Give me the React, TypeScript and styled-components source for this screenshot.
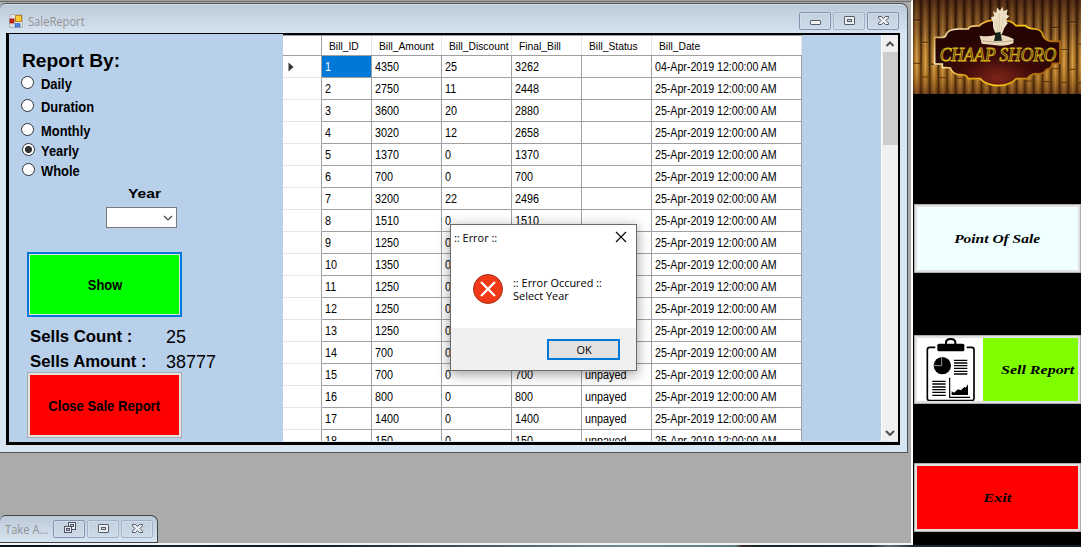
import React from "react";
import styled, { createGlobalStyle, css } from "styled-components";

const Global = createGlobalStyle`
  *, *::before, *::after { box-sizing: border-box; }
  html, body { margin: 0; padding: 0; overflow: hidden; }
  body { font-family: "Liberation Sans", Arial, sans-serif; color: #000; }
`;

const Screen = styled.div`
  display: grid;
  grid-template-columns: 913px 168px;
  grid-template-rows: 545px 2px;
  width: 1081px;
  height: 547px;
  overflow: hidden;
  position: relative;
  background: #000;
`;

const Client = styled.main`
  position: relative;
  background: #ababab;
  border-top: 1px solid #a0a0a0;
  border-right: 2px solid #fff;
  border-bottom: 2px solid #f4f4f4;
  box-shadow: inset 0 1px 0 #696969;
  padding-top: 2px;
  overflow: hidden;
`;

const Wallpaper = styled.div`
  grid-column: 1 / -1;
  background: linear-gradient(90deg, #06141a 0, #10242b 180px, #0a181e 300px, #31484e 430px, #6f8a90 620px, #5f7b82 735px,
    #3b2a22 742px, #12262d 760px, #1b3138 870px, #5a6d74 890px, #1a2b32 915px, #121f27 1081px);
`;

/* text squeezed or widened to the proportions of the form fonts */
const Text = styled.span<{ $size: number; $stretch?: number; $bold?: boolean; $family?: string; $italic?: boolean; $origin?: string }>`
  display: inline-block;
  white-space: pre;
  font-size: ${(p) => p.$size}px;
  font-weight: ${(p) => (p.$bold ? 700 : 400)};
  font-style: ${(p) => (p.$italic ? "italic" : "normal")};
  ${(p) => p.$family && css`font-family: ${p.$family};`}
  transform: scaleX(${(p) => p.$stretch ?? 1});
  transform-origin: ${(p) => p.$origin ?? "left"} center;
`;

const UI = `"Open Sans", "Noto Sans", sans-serif`;
const SCRIPT = `"Liberation Serif", "Times New Roman", serif`;

/* ---------- window chrome ---------- */

const Window = styled.section`
  display: flex;
  flex-direction: column;
  width: 908px;
  height: 450px;
  padding: 0 7px 7px 6px;
  border: 1px solid #4d5259;
  border-left: 0;
  border-radius: 6px 7px 0 0;
  background: linear-gradient(#bccad8, #d7e4f2 30px, #d7e4f2);
  box-shadow: inset 0 1px 0 #d5dfe9;
`;

const TitleBar = styled.header`
  display: flex;
  align-items: center;
  height: 29px;
  padding: 5px 1px 0 3px;
`;

const TitleText = styled.div`
  flex: 1;
  min-width: 0;
  color: #929292;
  line-height: 16px;
  padding-left: 5px;
`;

const MiniTitle = styled(TitleText)`
  padding: 2px 0 0;
`;

const CaptionButtons = styled.div`
  display: flex;
  gap: 2px;
`;

const CaptionButton = styled.button<{ $faint?: boolean }>`
  display: flex;
  align-items: center;
  justify-content: center;
  width: 32px;
  height: 18px;
  padding: 0 0 1px 1px;
  border: 1px solid ${(p) => (p.$faint ? "#a3b2c8" : "#8493b1")};
  border-radius: 2px;
  background: linear-gradient(#c3d0de, #cddae7);
  box-shadow: inset 0 0 0 1px #d2deea;
`;

const Frame = styled.div`
  display: flex;
  flex: 1;
  border: 3px solid #000;
  border-top-width: 1px;
  border-right-width: 2px;
  width: 894px;
`;

/* ---------- report options ---------- */

const Options = styled.aside`
  display: flex;
  flex-direction: column;
  width: 274px;
  height: 408px;
  padding-top: 9px;
  background: #b9d0eb;
`;

const Heading = styled.h1`
  margin: 0;
  padding-left: 13px;
  height: 31px;
  line-height: 27px;
`;

const RadioRow = styled.label<{ $gap?: number; $shift?: number }>`
  display: flex;
  align-items: center;
  gap: ${(p) => 7 - (p.$shift ?? 0)}px;
  height: 20px;
  margin-top: ${(p) => p.$gap ?? 0}px;
  padding-left: ${(p) => 12 + (p.$shift ?? 0)}px;
  line-height: 20px;
`;

const Radio = styled.span<{ $on?: boolean }>`
  width: 13px;
  height: 13px;
  margin-bottom: 3px;
  border: 1px solid #333;
  border-radius: 50%;
  background: ${(p) => (p.$on ? "radial-gradient(circle, #333 0 3.2px, #fff 3.9px)" : "#fff")};
`;

const YearField = styled.div`
  display: flex;
  flex-direction: column;
  padding: 3px 0 0 97px;
`;

const YearLabel = styled.div`
  height: 23px;
  line-height: 17px;
  padding-left: 22px;
`;

const Select = styled.div`
  display: flex;
  align-items: center;
  justify-content: flex-end;
  width: 71px;
  height: 21px;
  padding-right: 3px;
  border: 1px solid #7a7a7a;
  background: #fff;
`;

const ActionButton = styled.button<{ $color: string; $focus?: boolean; $top: number; $height: number }>`
  width: 155px;
  height: ${(p) => p.$height}px;
  margin: ${(p) => p.$top}px 0 0 18px;
  padding: 0;
  border: ${(p) => (p.$focus ? "2px solid #0078d7" : "1px solid #adadad")};
  background: ${(p) => p.$color};
  box-shadow: inset 0 0 0 ${(p) => (p.$focus ? 1 : 2)}px #e1e1e1;
  text-align: center;
`;

const Totals = styled.dl`
  display: grid;
  grid-template-columns: 136px 1fr;
  grid-auto-rows: 25px;
  margin: 7px 0 0;
  padding-left: 21px;
  height: 49px;
  line-height: 25px;
  dt, dd { margin: 0; }
`;

/* ---------- data grid ---------- */

const GridPane = styled.div`
  display: flex;
  flex: 1;
  height: 407px;
  border-top: 1px solid #000;
  background: #b9d0eb;
  overflow: hidden;
`;

const Table = styled.div`
  width: 519px;
  height: 406px;
  border-top: 1px solid #a0a0a0;
  overflow: hidden;
`;

const columns = "39px 50px 70px 70px 70px 70px 150px";

const HeadRow = styled.div`
  display: grid;
  grid-template-columns: ${columns};
  height: 20px;
  background: #fff;
  border-bottom: 1px solid #a0a0a0;
`;

const HeadCell = styled.div<{ $first?: boolean }>`
  border-right: 1px solid ${(p) => (p.$first ? "#a0a0a0" : "#e5e5e5")};
  padding-left: 7px;
  line-height: 18px;
  white-space: nowrap;
`;

const Row = styled.div`
  display: grid;
  grid-template-columns: ${columns};
  height: 22px;
  background: #fff;
`;

const RowHeader = styled.div`
  display: flex;
  align-items: center;
  padding-left: 5px;
  border-right: 1px solid #a0a0a0;
  border-bottom: 1px solid #e5e5e5;
`;

const Cell = styled.div<{ $selected?: boolean }>`
  padding-left: 3px;
  border-right: 1px solid #a0a0a0;
  border-bottom: 1px solid #a0a0a0;
  line-height: 20px;
  white-space: nowrap;
  color: ${(p) => (p.$selected ? "#fff" : "#000")};
  background: ${(p) => (p.$selected ? "#0078d7" : "#fff")};
`;

const ScrollBar = styled.div`
  display: flex;
  flex-direction: column;
  align-items: center;
  width: 17px;
  height: 406px;
  margin-left: auto;
  background: #f0f0f0;
  border-left: 1px solid #fff;
`;

const ScrollArrow = styled.div`
  display: flex;
  align-items: center;
  justify-content: center;
  height: 17px;
`;

const Thumb = styled.div`
  width: 15px;
  height: 93px;
  margin-bottom: auto;
  background: #cdcdcd;
`;

/* ---------- minimised child window ---------- */

const MiniWindow = styled.section`
  position: absolute;
  left: 0;
  top: 514px;
  display: flex;
  align-items: center;
  width: 158px;
  height: 28px;
  padding: 0 4px 1px 5px;
  border: 1px solid #3f444a;
  border-left: 0;
  border-radius: 6px 7px 0 0;
  background: linear-gradient(#bccad8, #d7e4f2);
`;

/* ---------- sidebar ---------- */

const Sidebar = styled.nav`
  display: flex;
  flex-direction: column;
  background: #000;
`;

const NavButton = styled.button<{ $color: string; $top: number }>`
  display: flex;
  align-items: center;
  justify-content: center;
  width: 167px;
  height: 69px;
  margin: ${(p) => p.$top}px 0 0 1px;
  padding: 1px 0 0;
  border: 1px solid #adadad;
  outline: 2px solid #e1e1e1;
  outline-offset: -3px;
  background: ${(p) => p.$color};
`;

const SplitButton = styled(NavButton)`
  justify-content: flex-start;
  padding: 2px;
`;

const SplitIcon = styled.span`
  display: flex;
  width: 66px;
  height: 63px;
  background: #fff;
`;

const SplitLabel = styled.span`
  flex: 1;
  text-align: left;
  padding: 1px 0 0 18px;
`;

/* ---------- message box ---------- */

const Dialog = styled.section`
  position: absolute;
  left: 450px;
  top: 224px;
  display: flex;
  flex-direction: column;
  width: 187px;
  height: 147px;
  border: 1px solid #6b6b6b;
  background: #fff;
  box-shadow: 0 3px 12px rgba(0, 0, 0, 0.4);
`;

const DialogTitle = styled.header`
  display: flex;
  justify-content: space-between;
  align-items: center;
  height: 24px;
  padding: 0 9px 0 3px;
`;

const DialogBody = styled.div`
  display: flex;
  flex: 1;
  gap: 10px;
  padding: 25px 0 0 22px;
`;

const DialogMessage = styled.p`
  display: flex;
  flex-direction: column;
  margin: 2px 0 0;
  line-height: 13px;
`;

const DialogFooter = styled.footer`
  display: flex;
  justify-content: flex-end;
  height: 42px;
  padding: 11px 16px 0 0;
  background: #f0f0f0;
`;

const OkButton = styled.button`
  width: 73px;
  height: 21px;
  padding: 0;
  border: 2px solid #0078d7;
  background: #e1e1e1;
  line-height: 17px;
`;

/* ---------- drawings ---------- */

const FormIcon = () => (
  <svg width="14" height="14" viewBox="0 0 14 14">
    <rect x="0.5" y="0.5" width="13" height="13" fill="#d8dcdf" stroke="#b4bac0" />
    <path d="M5 1v12M1 9h12" stroke="#f5f5f5" />
    <rect x="1" y="5" width="4" height="4" fill="#d0241b" stroke="#8b1510" strokeWidth=".8" />
    <rect x="6.5" y="1.5" width="6" height="6" fill="#fbc93a" stroke="#b9851a" />
    <rect x="6" y="9.5" width="5" height="3.5" fill="#4f87e0" stroke="#2d5db5" strokeWidth=".6" />
  </svg>
);

const MinimizeGlyph = () => (
  <svg width="11" height="9" viewBox="0 0 11 9">
    <rect x="0.5" y="4.5" width="10" height="4" rx="0.6" fill="#f2f2f2" stroke="#555a6b" />
  </svg>
);

const MaximizeGlyph = () => (
  <svg width="11" height="9" viewBox="0 0 11 9">
    <rect x="0.5" y="0.5" width="10" height="8" rx="0.6" fill="#eef0f2" stroke="#555a6b" />
    <rect x="3.5" y="3.5" width="4" height="2" fill="#cbd6e2" stroke="#555a6b" />
  </svg>
);

const RestoreGlyph = () => (
  <svg width="12" height="12" viewBox="0 0 12 12">
    <rect x="4.5" y="0.5" width="7" height="7" fill="#eef0f2" stroke="#4b5064" />
    <rect x="6.500" y="2.500" width="3" height="2" fill="#cbd6e2" stroke="#4b5064" />
    <rect x="0.5" y="4.5" width="7" height="6" fill="#eef0f2" stroke="#4b5064" />
    <rect x="2.5" y="6.500" width="3" height="2" fill="#cbd6e2" stroke="#4b5064" />
  </svg>
);

const CloseGlyph = () => (
  <svg width="11" height="9" viewBox="0 0 11 9">
    <path
      d="M0.500 0.500h3L5.500 2.600 7.500 0.500h3v1.400L8 4.500l2.500 2.600v1.400h-3L5.500 6.400 3.500 8.500h-3V7.100L3 4.500 0.500 1.900z"
      fill="#f0f1f3"
      stroke="#555a6b"
    />
  </svg>
);

const Chevron = ({ up, bold }: { up?: boolean; bold?: boolean }) => (
  <svg width="10" height="6" viewBox="0 0 10 6">
    <path d={up ? "M1.500 5L5 1.500 8.500 5" : "M1 1L5 5 9 1"} fill="none" stroke={bold ? "#505050" : "#444"} strokeWidth={bold ? 2 : 1.1} />
  </svg>
);

const ErrorIcon = () => (
  <svg width="30" height="30" viewBox="0 0 30 30">
    <circle cx="15" cy="15" r="14.500" fill="#f03a17" stroke="#a32b17" />
    <path d="M8 8L22 22M22 8L8 22" stroke="#fff" strokeWidth="2.300" />
  </svg>
);

const ClipboardIcon = () => (
  <svg width="66" height="63" viewBox="36 444 198 189">
    <rect x="67" y="472" width="140" height="160" rx="7" fill="#fff" stroke="#000" strokeWidth="5" />
    <rect x="91" y="466" width="94" height="12" fill="#fff" />
    <path d="M123 462v-4q0-11 14-11t14 11v4" fill="none" stroke="#000" strokeWidth="6" />
    <rect x="97" y="461" width="81" height="23" rx="5" fill="#000" />
    <circle cx="112" cy="527" r="26" fill="#000" />
    <path d="M110 500v27H84" fill="none" stroke="#999" strokeWidth="3" />
    <path d="M147 511h40M147 519h40M147 527h40M147 535h40M147 544h40M147 552h40M82 574h40M82 582h40M82 591h40M82 599h40M82 607h40M82 616h40" stroke="#000" strokeWidth="4" />
    <path d="M134 563v59h61" fill="none" stroke="#000" strokeWidth="3.500" />
    <path d="M140 615v-11l7 4 12-10 9 3 10-10 4 2 7-10v32z" fill="#000" />
  </svg>
);

const culms = Array.from({ length: 20 }, (_, i) => i);

const LogoBanner = () => (
  <svg width="168" height="94" viewBox="24 0 504 282">
    <defs>
      <linearGradient id="culm">
        <stop offset="0" stopColor="#1c0f06" />
        <stop offset="0.180" stopColor="#8a5a26" />
        <stop offset="0.500" stopColor="#d9a452" />
        <stop offset="0.820" stopColor="#8d5a22" />
        <stop offset="1" stopColor="#1c0f06" />
      </linearGradient>
      <linearGradient id="shade" x1="0" y1="0" x2="0" y2="1">
        <stop offset="0" stopColor="#2a0e06" stopOpacity="0.750" />
        <stop offset="0.350" stopColor="#4a2408" stopOpacity="0.350" />
        <stop offset="0.650" stopColor="#e09a10" stopOpacity="0.150" />
        <stop offset="1" stopColor="#4a1c08" stopOpacity="0.620" />
      </linearGradient>
      <radialGradient id="board" cx="0.500" cy="0.880" r="0.600">
        <stop offset="0" stopColor="#7d2418" />
        <stop offset="0.500" stopColor="#3d0a08" />
        <stop offset="1" stopColor="#260404" />
      </radialGradient>
      <linearGradient id="rim" x1="0" y1="0" x2="1" y2="0.300">
        <stop offset="0" stopColor="#b07a20" />
        <stop offset="0.200" stopColor="#fff0c0" />
        <stop offset="0.450" stopColor="#e09a10" />
        <stop offset="0.700" stopColor="#ffd21c" />
        <stop offset="1" stopColor="#a8650e" />
      </linearGradient>
    </defs>
    {culms.map((i) => (
      <g key={i}>
        <rect x={22 + i * 26} y="0" width="26" height="282" fill="url(#culm)" />
        <path d={`M${24 + i * 26} ${60 + ((i * 67) % 150)}h22M${24 + i * 26} ${190 + ((i * 41) % 80)}h22`} stroke="#3e220c" strokeWidth="3" />
        <path d={`M${24 + i * 26} ${64 + ((i * 67) % 150)}h22`} stroke="#f0c76e" strokeWidth="2" opacity="0.600" />
      </g>
    ))}
    <rect x="24" y="0" width="504" height="282" fill="url(#shade)" />
    <path
      d="M89 112H112Q122 112 124 102Q130 88 160 87H190Q192 76 222 78Q240 60 280 59Q320 60 333 77H362Q366 86 392 87Q412 90 414 108Q424 124 440 124H465V190H442Q440 206 424 208Q416 224 392 221Q376 224 366 236H334Q316 256 280 257Q240 254 226 236H190Q186 222 160 224Q142 220 136 204Q130 203 124 203H112V192H89Z"
      fill="url(#board)"
      stroke="url(#rim)"
      strokeWidth="5"
    />
    <path d="M276 104Q262 90 264 68L258 52 268 48 264 34 274 38 276 22 285 32 292 20 296 34 308 28 305 44 313 48 303 60 308 70 298 84 290 104Z" fill="#eee0c4" />
    <path d="M284 40L282 98M296 50L286 98M273 60L279 96" stroke="#cdb892" strokeWidth="1.500" fill="none" />
    <path d="M224 107Q248 112 270 105L296 106Q314 111 326 117L325 130Q310 138 286 137L230 131Q228 122 224 107Z" fill="#ead9bd" />
    <path d="M230 122Q270 130 322 122" stroke="#a98b66" strokeWidth="2" fill="none" />
    <path d="M267 123L272 98 286 96 291 122Z" fill="#14241c" />
    <text
      x="104" y="182" textLength="350" lengthAdjust="spacingAndGlyphs"
      fontFamily='"Liberation Serif", "Times New Roman", serif' fontStyle="italic" fontSize="54"
      fill="#2d1403" stroke="#d6b41c" strokeWidth="2.600"
    >
      CHAAP SHORO
    </text>
  </svg>
);

/* ---------- data ---------- */

const MIDNIGHT = "25-Apr-2019 12:00:00 AM";
const bills: string[][] = [
  ["1", "4350", "25", "3262", "", "04-Apr-2019 12:00:00 AM"],
  ["2", "2750", "11", "2448", "", MIDNIGHT],
  ["3", "3600", "20", "2880", "", MIDNIGHT],
  ["4", "3020", "12", "2658", "", MIDNIGHT],
  ["5", "1370", "0", "1370", "", MIDNIGHT],
  ["6", "700", "0", "700", "", MIDNIGHT],
  ["7", "3200", "22", "2496", "", "25-Apr-2019 02:00:00 AM"],
  ["8", "1510", "0", "1510", "", MIDNIGHT],
  ["9", "1250", "0", "1250", "", MIDNIGHT],
  ["10", "1350", "0", "1350", "", MIDNIGHT],
  ["11", "1250", "0", "1250", "", MIDNIGHT],
  ["12", "1250", "0", "1250", "", MIDNIGHT],
  ["13", "1250", "0", "1250", "", MIDNIGHT],
  ["14", "700", "0", "700", "", MIDNIGHT],
  ["15", "700", "0", "700", "unpayed", MIDNIGHT],
  ["16", "800", "0", "800", "unpayed", MIDNIGHT],
  ["17", "1400", "0", "1400", "unpayed", MIDNIGHT],
  ["18", "150", "0", "150", "unpayed", MIDNIGHT],
];

const headers = ["Bill_ID", "Bill_Amount", "Bill_Discount", "Final_Bill", "Bill_Status", "Bill_Date"];

const periods = [
  { name: "Daily", gap: 0, shift: 0 },
  { name: "Duration", gap: 3, shift: 0 },
  { name: "Monthly", gap: 4, shift: 0 },
  { name: "Yearly", gap: 0, shift: 1 },
  { name: "Whole", gap: 0, shift: 1 },
];

export default function App() {
  return (
    <Screen>
      <Global />
      <Client>
        <Window>
          <TitleBar>
            <FormIcon />
            <TitleText><Text $size={12} $family={UI} $stretch={0.93}>SaleReport</Text></TitleText>
            <CaptionButtons>
              <CaptionButton><MinimizeGlyph /></CaptionButton>
              <CaptionButton $faint><MaximizeGlyph /></CaptionButton>
              <CaptionButton><CloseGlyph /></CaptionButton>
            </CaptionButtons>
          </TitleBar>
          <Frame>
            <Options>
              <Heading><Text $size={19} $bold $stretch={1.01}>Report By:</Text></Heading>
              {periods.map((p) => (
                <RadioRow key={p.name} $gap={p.gap} $shift={p.shift}>
                  <Radio $on={p.name === "Yearly"} />
                  <Text $size={15} $bold $stretch={0.86}>{p.name}</Text>
                </RadioRow>
              ))}
              <YearField>
                <YearLabel><Text $size={13} $bold $stretch={1.2}>Year</Text></YearLabel>
                <Select><Chevron /></Select>
              </YearField>
              <ActionButton $color="#00ff00" $focus $top={24} $height={65}>
                <Text $size={15} $bold $stretch={0.86} $origin="center">Show</Text>
              </ActionButton>
              <Totals>
                <dt><Text $size={17} $bold $stretch={0.985}>Sells Count :</Text></dt>
                <dd><Text $size={19} $stretch={0.945}>25</Text></dd>
                <dt><Text $size={17} $bold $stretch={0.985}>Sells Amount :</Text></dt>
                <dd><Text $size={19} $stretch={0.945}>38777</Text></dd>
              </Totals>
              <ActionButton $color="#ff0000" $top={-1} $height={66}>
                <Text $size={15} $bold $stretch={0.87} $origin="center">Close Sale Report</Text>
              </ActionButton>
            </Options>
            <GridPane>
              <Table>
                <HeadRow>
                  <HeadCell $first />
                  {headers.map((h) => (
                    <HeadCell key={h}><Text $size={11.5} $stretch={0.895}>{h}</Text></HeadCell>
                  ))}
                </HeadRow>
                {bills.map((bill, r) => (
                  <Row key={bill[0]}>
                    <RowHeader>
                      {r === 0 && (
                        <svg width="6" height="10" viewBox="0 0 6 10"><path d="M0.500 0.500L5.500 5 0.500 9.500z" fill="#333" /></svg>
                      )}
                    </RowHeader>
                    {bill.map((value, c) => (
                      <Cell key={c} $selected={r === 0 && c === 0}>
                        <Text $size={12} $stretch={c === 5 ? 0.885 : 0.9}>{value}</Text>
                      </Cell>
                    ))}
                  </Row>
                ))}
              </Table>
              <ScrollBar>
                <ScrollArrow><Chevron up bold /></ScrollArrow>
                <Thumb />
                <ScrollArrow><Chevron bold /></ScrollArrow>
              </ScrollBar>
            </GridPane>
          </Frame>
        </Window>
        <MiniWindow>
          <MiniTitle><Text $size={12} $family={UI} $stretch={0.93}>Take A...</Text></MiniTitle>
          <CaptionButtons>
            <CaptionButton><RestoreGlyph /></CaptionButton>
            <CaptionButton $faint><MaximizeGlyph /></CaptionButton>
            <CaptionButton $faint><CloseGlyph /></CaptionButton>
          </CaptionButtons>
        </MiniWindow>
      </Client>
      <Sidebar>
        <LogoBanner />
        <NavButton $color="#f0ffff" $top={110}>
          <Text $size={13} $family={SCRIPT} $bold $italic $stretch={1.19} $origin="center">Point Of Sale</Text>
        </NavButton>
        <SplitButton $color="#80ff00" $top={62}>
          <SplitIcon><ClipboardIcon /></SplitIcon>
          <SplitLabel><Text $size={13} $family={SCRIPT} $bold $italic $stretch={1.23}>Sell Report</Text></SplitLabel>
        </SplitButton>
        <NavButton $color="#ff0000" $top={59}>
          <Text $size={13} $family={SCRIPT} $bold $italic $stretch={1.25} $origin="center">Exit</Text>
        </NavButton>
      </Sidebar>
      <Wallpaper />
      <Dialog role="alertdialog">
        <DialogTitle>
          <Text $size={11.5} $family={UI} $stretch={0.95}>:: Error ::</Text>
          <svg width="12" height="12" viewBox="0 0 12 12"><path d="M1 1L11 11M11 1L1 11" stroke="#000" strokeWidth="1.100" /></svg>
        </DialogTitle>
        <DialogBody>
          <ErrorIcon />
          <DialogMessage>
            <Text $size={11.5} $family={UI} $stretch={0.95}>:: Error Occured ::</Text>
            <Text $size={11.5} $family={UI} $stretch={0.95}>Select Year</Text>
          </DialogMessage>
        </DialogBody>
        <DialogFooter>
          <OkButton><Text $size={11.5} $family={UI} $stretch={0.95} $origin="center">OK</Text></OkButton>
        </DialogFooter>
      </Dialog>
    </Screen>
  );
}
